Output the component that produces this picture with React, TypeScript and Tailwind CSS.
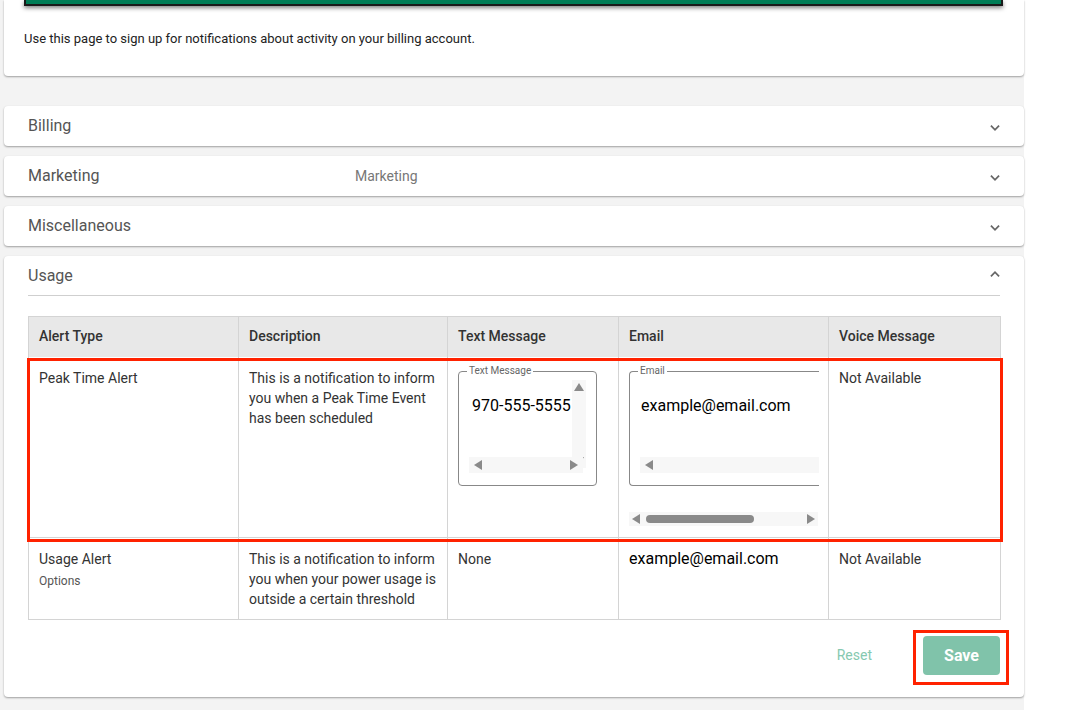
import React from "react";

const Chevron = ({ up }: { up?: boolean }) => (
  <svg width="14" height="14" viewBox="0 0 24 24" className={up ? "rotate-180" : ""}>
    <path d="M5 8l7 7 7-7" fill="none" stroke="#666" strokeWidth="3" />
  </svg>
);

const Acc = ({ title, extra }: { title: string; extra?: string }) => (
  <div className="h-[40px] bg-white rounded shadow-[0_1px_2px_rgba(0,0,0,0.35)] flex items-center pl-6 pr-[22px] relative">
    <span className="text-base text-[#555] w-[327px]">{title}</span>
    {extra && <span className="text-[14px] text-[#777]">{extra}</span>}
    <span className="ml-auto mt-1"><Chevron /></span>
  </div>
);

const Tri = ({ d }: { d: "u" | "d" | "l" | "r" }) => {
  const p = { u: "M0 8L5 0L10 8Z", d: "M0 0L10 0L5 8Z", l: "M8 0L8 10L0 5Z", r: "M0 0L0 10L8 5Z" }[d];
  const v = d === "u" || d === "d";
  return (
    <svg width={v ? 10 : 8} height={v ? 8 : 10} viewBox={v ? "0 0 10 8" : "0 0 8 10"}>
      <path d={p} fill="#8a8a8a" />
    </svg>
  );
};

const lib = "[font-family:'Liberation_Sans',Arial,sans-serif]";

export default function App() {
  const cell = "border-r border-[#d4d4d4] px-[10px] align-top";
  const hcell = "border-r border-[#d4d4d4] px-[10px] align-middle font-medium text-[#333]";
  return (
    <div className="min-h-[710px] bg-[#f3f3f3] pl-1 w-[1024px] [font-family:Roboto,sans-serif] text-[#333] relative">
      <div className="h-[76px] bg-white rounded-b shadow-[0_1px_2px_rgba(0,0,0,0.35)] relative">
        <div className="absolute left-5 right-[21px] top-0 h-[6px] bg-[#007d56] border-b-2 border-x-2 border-[#1a1a1a] shadow-[0_2px_4px_rgba(0,0,0,0.5)]" />
        <p className="absolute left-5 top-[29px] text-[13px] text-[#222]">Use this page to sign up for notifications about activity on your billing account.</p>
      </div>
      <div className="mt-[30px] flex flex-col gap-[10px]">
        <Acc title="Billing" />
        <Acc title="Marketing" extra="Marketing" />
        <Acc title="Miscellaneous" />
        <div className="bg-white rounded shadow-[0_1px_2px_rgba(0,0,0,0.35)] px-6 pb-[22px]">
          <div className="h-[40px] flex items-center border-b border-[#cfcfcf] -mb-px">
            <span className="text-base text-[#555]">Usage</span>
            <span className="ml-auto mr-[-2px] -mt-1"><Chevron up /></span>
          </div>
          <div className="h-[21px]" />
          <table className="w-[972px] border-collapse text-[14px] border border-[#d4d4d4] table-fixed">
            <colgroup>
              <col className="w-[210px]" /><col className="w-[209px]" /><col className="w-[171px]" /><col className="w-[210px]" /><col className="w-[172px]" />
            </colgroup>
            <thead>
              <tr className="h-[40px] bg-[#e8e8e8] text-left">
                {["Alert Type", "Description", "Text Message", "Email", "Voice Message"].map((h) => (
                  <th key={h} className={hcell}>{h}</th>
                ))}
              </tr>
            </thead>
            <tbody>
              <tr className="h-[181px]">
                <td className={`${cell} pt-[11px]`}>Peak Time Alert</td>
                <td className={`${cell} pt-[11px] leading-[20px]`}>This is a notification to inform you when a Peak Time Event has been scheduled</td>
                <td className={`${cell} pt-[14px]`}>
                  <div className="relative w-[139px] h-[115px] border border-[#888] rounded-[4px]">
                    <span className="absolute -top-[7px] left-[8px] bg-white px-[2px] text-[10px] leading-[12px] text-[#666]">Text Message</span>
                    <span className={`absolute left-[13px] top-[22px] text-[16px] text-black ${lib}`}>970-555-5555</span>
                    <div className="absolute right-[10px] top-[8px] w-[14px] h-[88px] bg-[#f7f7f7] flex flex-col items-center justify-between py-[3px]"><Tri d="u" /><Tri d="d" /></div>
                    <div className="absolute left-[10px] top-[85px] w-[114px] h-[16px] bg-[#f7f7f7] flex items-center justify-between px-[5px]"><Tri d="l" /><Tri d="r" /></div>
                  </div>
                </td>
                <td className={`${cell} pt-[14px]`}>
                  <div className="relative w-[190px] h-[115px] border border-r-0 border-[#888] rounded-l-[4px]">
                    <span className="absolute -top-[7px] left-[8px] bg-white px-[2px] text-[10px] leading-[12px] text-[#666]">Email</span>
                    <span className={`absolute left-[11px] top-[22px] text-[16px] text-black ${lib}`}>example@email.com</span>
                    <div className="absolute left-[10px] top-[85px] right-0 h-[16px] bg-[#f7f7f7] flex items-center px-[5px]"><Tri d="l" /></div>
                  </div>
                  <div className="mt-[26px] w-[189px] h-[14px] bg-[#f7f7f7] flex items-center gap-[6px] px-[3px]">
                    <Tri d="l" />
                    <div className="w-[108px] h-[8px] rounded-full bg-[#8a8a8a]" />
                    <span className="ml-auto"><Tri d="r" /></span>
                  </div>
                </td>
                <td className={`${cell} pt-[11px]`}>Not Available</td>
              </tr>
              <tr className="h-[82px] border-t border-[#d4d4d4]">
                <td className={`${cell} pt-[11px]`}>Usage Alert<div className="text-[12px] text-[#555] mt-[2px]">Options</div></td>
                <td className={`${cell} pt-[11px] leading-[20px]`}>This is a notification to inform you when your power usage is outside a certain threshold</td>
                <td className={`${cell} pt-[11px]`}>None</td>
                <td className={`${cell} pt-[9px] text-[16px] text-black ${lib}`}>example@email.com</td>
                <td className={`${cell} pt-[11px]`}>Not Available</td>
              </tr>
            </tbody>
          </table>
          <div className="flex items-center justify-end mt-4 gap-[51px]">
            <span className="text-[14px] text-[#86c9b0]">Reset</span>
            <button className="w-[77px] h-[39px] rounded bg-[#80c3aa] text-white font-bold text-base">Save</button>
          </div>
        </div>
      </div>
      <div className="absolute left-[27px] top-[358px] w-[976px] h-[184px] border-[3px] border-[#ff2200] pointer-events-none" />
      <div className="absolute left-[913px] top-[630px] w-[96px] h-[55px] border-[3px] border-[#ff2200] pointer-events-none" />
    </div>
  );
}
